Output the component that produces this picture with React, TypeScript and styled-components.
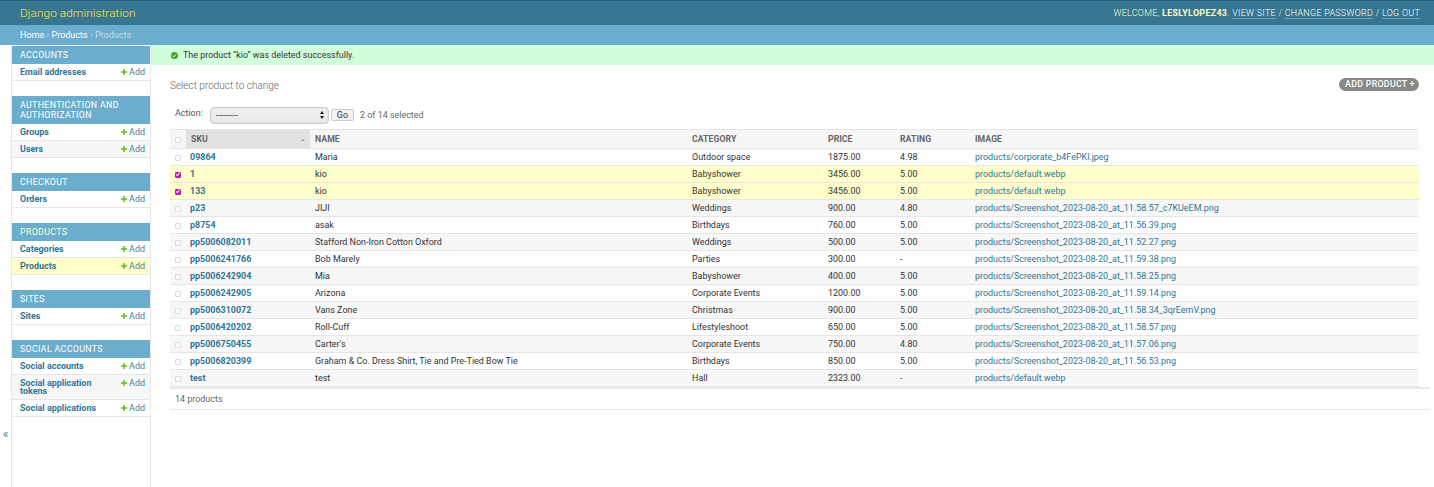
import React from 'react';
import styled, { createGlobalStyle } from 'styled-components';

const GlobalStyle = createGlobalStyle`
  html, body {
    margin: 0;
    padding: 0;
    background: #fff;
    font-family: Roboto, "Liberation Sans", sans-serif;
    font-size: 8.95px;
    color: #333;
  }
`;

const Page = styled.div`
  width: 1434px;
  height: 487px;
  overflow: hidden;
  display: flex;
  flex-direction: column;
`;

const Header = styled.header`
  height: 24px;
  border-top: 1px solid #2a5f78;
  background: #367691;
  display: flex;
  align-items: center;
  justify-content: space-between;
  padding: 0 14px 0 20px;
  flex-shrink: 0;
`;

const Branding = styled.div`
  color: #ffe53d;
  font-size: 11.8px;
  font-weight: 300;
  letter-spacing: 0.08px;
`;

const UserTools = styled.div`
  color: #ffc;
  font-size: 8.9px;
  letter-spacing: 0.32px;
  font-weight: 300;
  strong { font-weight: 700; }
  a {
    color: #fff;
    border-bottom: 1px solid rgba(255, 255, 255, 0.3);
  }
`;

const Breadcrumbs = styled.div`
  height: 20px;
  background: #6cadcd;
  color: #c4dce8;
  display: flex;
  align-items: center;
  padding-left: 20px;
  font-size: 9px;
  flex-shrink: 0;
  a { color: #fff; }
  span { margin: 0 2.3px; }
`;

const Body = styled.div`
  flex: 1;
  display: flex;
  min-height: 0;
`;

const Toggle = styled.div`
  width: 11px;
  border-right: 1px solid #e6e6e6;
  display: flex;
  align-items: flex-end;
  justify-content: center;
  color: #447e9b;
  font-size: 12px;
  line-height: 12px;
  flex-shrink: 0;
  padding-bottom: 47px;
`;

const Sidebar = styled.nav`
  width: 138px;
  border-right: 1px solid #e6e6e6;
  padding-top: 1px;
  flex-shrink: 0;
`;

const AppBlock = styled.div`
  margin-bottom: 15px;
`;

const AppCaption = styled.div<{ $current?: boolean }>`
  background: #6cadcd;
  color: ${(p) => (p.$current ? '#ffc' : '#fff')};
  font-size: 8.8px;
  letter-spacing: 0.35px;
  line-height: 10px;
  padding: 4px 8px;
  min-height: 10px;
`;

const ModelRow = styled.div<{ $current?: boolean; $alt?: boolean }>`
  display: flex;
  justify-content: space-between;
  align-items: flex-start;
  padding: 4px 5px 4px 8px;
  line-height: 8px;
  min-height: 8px;
  border-bottom: 1px solid #e6e6e6;
  background: ${(p) => (p.$current ? '#ffc' : p.$alt ? '#f7f7f7' : '#fff')};
`;

const ModelLink = styled.a`
  color: #2f7596;
  font-weight: 700;
  font-size: 8.95px;
  max-width: 92px;
`;

const AddLink = styled.a`
  color: #447e9b;
  font-size: 8.95px;
  white-space: nowrap;
  display: flex;
  align-items: center;
  gap: 2px;
  flex-shrink: 0;
`;

const Main = styled.main`
  flex: 1;
  min-width: 0;
`;

const Message = styled.div`
  height: 20px;
  background: #d1ffdb;
  display: flex;
  align-items: center;
  gap: 5px;
  padding-left: 20px;
  color: #333;
`;

const Content = styled.div`
  padding: 0 15px 0 19px;
`;

const TitleRow = styled.div`
  display: flex;
  justify-content: space-between;
  align-items: flex-start;
  padding-top: 14px;
  height: 27px;
`;

const Title = styled.h1`
  margin: 0;
  font-size: 10px;
  font-weight: 300;
  color: #666;
  line-height: 14px;
`;

const AddButton = styled.a`
  background: #888;
  color: #fff;
  font-size: 8.8px;
  font-weight: 500;
  letter-spacing: 0.3px;
  line-height: 13px;
  height: 13px;
  border-radius: 7px;
  padding: 0 4px 0 6px;
  margin-top: -1px;
`;

const Actions = styled.div`
  display: flex;
  align-items: center;
  height: 18px;
  padding-left: 5px;
  margin-bottom: 5px;
  color: #555;
`;

const ActionLabel = styled.span`
  margin-bottom: 4px;
`;

const ActionSelect = styled.div`
  width: 119px;
  height: 17px;
  margin-left: 7px;
  box-sizing: border-box;
  border: 1px solid #ccc;
  border-radius: 4px;
  background: linear-gradient(#f0f0f0, #e8e8e8);
  box-shadow: inset 0 0 1px #aaa;
  display: flex;
  align-items: center;
  justify-content: space-between;
  padding: 0 4px 0 5px;
  color: #333;
  font-size: 8.5px;
  letter-spacing: 0.1px;
`;

const GoButton = styled.div`
  margin-left: 2px;
  border: 1px solid #ccc;
  border-radius: 2px;
  background: #f3f3f3;
  color: #333;
  line-height: 10px;
  padding: 0 5px;
`;

const Counter = styled.span`
  margin-left: 6px;
  color: #666;
`;

const Table = styled.table`
  border-collapse: collapse;
  table-layout: fixed;
  width: 1249px;
`;

const Th = styled.th<{ $w: number; $sorted?: boolean }>`
  width: ${(p) => p.$w}px;
  box-sizing: border-box;
  height: 19px;
  padding: 0 5px;
  text-align: left;
  color: #666;
  font-size: 8.7px;
  font-weight: 700;
  letter-spacing: 0.05px;
  background: ${(p) => (p.$sorted ? '#e1e1e1' : '#f6f6f6')};
  border-top: 1px solid #e6e6e6;
  border-bottom: 1px solid #e6e6e6;
  position: relative;
`;

const SortMark = styled.i`
  position: absolute;
  right: 5px;
  top: 9px;
  width: 0;
  height: 0;
  border-left: 2px solid transparent;
  border-right: 2px solid transparent;
  border-bottom: 2px solid #999;
`;

const Tr = styled.tr<{ $selected?: boolean; $alt?: boolean }>`
  background: ${(p) => (p.$selected ? '#ffc' : p.$alt ? '#f7f7f7' : '#fff')};
`;

const Td = styled.td`
  height: 17px;
  box-sizing: border-box;
  padding: 0 5px;
  border-bottom: 1px solid #e6e6e6;
  color: #333;
  white-space: nowrap;
`;

const SkuCell = styled(Td)`
  padding-left: 4px;
`;

const RowLink = styled.a<{ $bold?: boolean }>`
  color: #2f7596;
  font-weight: ${(p) => (p.$bold ? 700 : 400)};
`;

const Check = styled.span<{ $checked?: boolean }>`
  display: inline-block;
  box-sizing: border-box;
  width: 6px;
  height: 6px;
  vertical-align: middle;
  border-radius: 1px;
  border: 1px solid ${(p) => (p.$checked ? '#c018b8' : '#ddd')};
  background: ${(p) => (p.$checked ? '#c018b8' : '#fff')};
  position: relative;
  &::after {
    content: ${(p) => (p.$checked ? '""' : 'none')};
    position: absolute;
    left: 1px;
    top: -1px;
    width: 1px;
    height: 3px;
    border: solid #fff;
    border-width: 0 1px 1px 0;
    transform: rotate(40deg);
  }
`;

const Paginator = styled.div`
  box-sizing: border-box;
  height: 23px;
  width: 1260px;
  border-top: 2px solid #e8e8e8;
  border-bottom: 1px solid #e6e6e6;
  padding-left: 5px;
  display: flex;
  align-items: center;
  color: #666;
`;

const PlusIcon = () => (
  <svg width="6" height="6" viewBox="0 0 6 6">
    <path d="M2.2 0h1.6v2.2H6v1.6H3.8V6H2.2V3.8H0V2.2h2.2z" fill="#5fc41c" />
  </svg>
);

const SuccessIcon = () => (
  <svg width="7" height="7" viewBox="0 0 7 7">
    <circle cx="3.5" cy="3.5" r="3.5" fill="#40a520" />
    <path d="M1.8 3.6l1.2 1.2 2.2-2.4" stroke="#fff" strokeWidth="1" fill="none" />
  </svg>
);

const SelectArrows = () => (
  <svg width="4" height="8" viewBox="0 0 4 8">
    <path d="M2 0l2 3H0zM2 8L0 5h4z" fill="#222" />
  </svg>
);

const apps = [
  { name: 'ACCOUNTS', models: ['Email addresses'] },
  { name: 'AUTHENTICATION AND AUTHORIZATION', models: ['Groups', 'Users'] },
  { name: 'CHECKOUT', models: ['Orders'] },
  { name: 'PRODUCTS', current: true, models: ['Categories', 'Products'] },
  { name: 'SITES', models: ['Sites'] },
  { name: 'SOCIAL ACCOUNTS', models: ['Social accounts', 'Social application tokens', 'Social applications'] },
];

const columns = [
  { label: 'SKU', w: 124, sorted: true },
  { label: 'NAME', w: 377 },
  { label: 'CATEGORY', w: 136 },
  { label: 'PRICE', w: 72 },
  { label: 'RATING', w: 75 },
  { label: 'IMAGE', w: 449 },
];

const rows = [
  ['09864', 'Maria', 'Outdoor space', '1875.00', '4.98', 'products/corporate_b4FePKl.jpeg'],
  ['1', 'kio', 'Babyshower', '3456.00', '5.00', 'products/default.webp'],
  ['133', 'kio', 'Babyshower', '3456.00', '5.00', 'products/default.webp'],
  ['p23', 'JIJI', 'Weddings', '900.00', '4.80', 'products/Screenshot_2023-08-20_at_11.58.57_c7KUeEM.png'],
  ['p8754', 'asak', 'Birthdays', '760.00', '5.00', 'products/Screenshot_2023-08-20_at_11.56.39.png'],
  ['pp5006082011', 'Stafford Non-Iron Cotton Oxford', 'Weddings', '500.00', '5.00', 'products/Screenshot_2023-08-20_at_11.52.27.png'],
  ['pp5006241766', 'Bob Marely', 'Parties', '300.00', '-', 'products/Screenshot_2023-08-20_at_11.59.38.png'],
  ['pp5006242904', 'Mia', 'Babyshower', '400.00', '5.00', 'products/Screenshot_2023-08-20_at_11.58.25.png'],
  ['pp5006242905', 'Arizona', 'Corporate Events', '1200.00', '5.00', 'products/Screenshot_2023-08-20_at_11.59.14.png'],
  ['pp5006310072', 'Vans Zone', 'Christmas', '900.00', '5.00', 'products/Screenshot_2023-08-20_at_11.58.34_3qrEemV.png'],
  ['pp5006420202', 'Roll-Cuff', 'Lifestyleshoot', '650.00', '5.00', 'products/Screenshot_2023-08-20_at_11.58.57.png'],
  ['pp5006750455', "Carter's", 'Corporate Events', '750.00', '4.80', 'products/Screenshot_2023-08-20_at_11.57.06.png'],
  ['pp5006820399', 'Graham & Co. Dress Shirt, Tie and Pre-Tied Bow Tie', 'Birthdays', '850.00', '5.00', 'products/Screenshot_2023-08-20_at_11.56.53.png'],
  ['test', 'test', 'Hall', '2323.00', '-', 'products/default.webp'],
];

export default function App() {
  return (
    <Page>
      <GlobalStyle />
      <Header>
        <Branding>Django administration</Branding>
        <UserTools>
          WELCOME, <strong>LESLYLOPEZ43</strong>. <a>VIEW SITE</a> / <a>CHANGE PASSWORD</a> / <a>LOG OUT</a>
        </UserTools>
      </Header>
      <Breadcrumbs>
        <a>Home</a>
        <span>›</span>
        <a>Products</a>
        <span>›</span>
        Products
      </Breadcrumbs>
      <Body>
        <Toggle>«</Toggle>
        <Sidebar>
          {apps.map((app) => (
            <AppBlock key={app.name}>
              <AppCaption $current={app.current}>{app.name}</AppCaption>
              {app.models.map((m, i) => (
                <ModelRow key={m} $alt={i % 2 === 1} $current={app.current && m === 'Products'}>
                  <ModelLink>{m}</ModelLink>
                  <AddLink>
                    <PlusIcon />
                    Add
                  </AddLink>
                </ModelRow>
              ))}
            </AppBlock>
          ))}
        </Sidebar>
        <Main>
          <Message>
            <SuccessIcon />
            The product “kio” was deleted successfully.
          </Message>
          <Content>
            <TitleRow>
              <Title>Select product to change</Title>
              <AddButton>ADD PRODUCT +</AddButton>
            </TitleRow>
            <Actions>
              <ActionLabel>Action:</ActionLabel>
              <ActionSelect>
                ---------
                <SelectArrows />
              </ActionSelect>
              <GoButton>Go</GoButton>
              <Counter>2 of 14 selected</Counter>
            </Actions>
            <Table>
              <thead>
                <tr>
                  <Th $w={16}>
                    <Check />
                  </Th>
                  {columns.map((c) => (
                    <Th key={c.label} $w={c.w} $sorted={c.sorted}>
                      {c.label}
                      {c.sorted && <SortMark />}
                    </Th>
                  ))}
                </tr>
              </thead>
              <tbody>
                {rows.map((r, i) => {
                  const selected = i === 1 || i === 2;
                  return (
                    <Tr key={r[0]} $selected={selected} $alt={i % 2 === 1}>
                      <Td>
                        <Check $checked={selected} />
                      </Td>
                      <SkuCell>
                        <RowLink $bold>{r[0]}</RowLink>
                      </SkuCell>
                      <Td>{r[1]}</Td>
                      <Td>{r[2]}</Td>
                      <Td>{r[3]}</Td>
                      <Td>{r[4]}</Td>
                      <Td>
                        <RowLink>{r[5]}</RowLink>
                      </Td>
                    </Tr>
                  );
                })}
              </tbody>
            </Table>
            <Paginator>14 products</Paginator>
          </Content>
        </Main>
      </Body>
    </Page>
  );
}
